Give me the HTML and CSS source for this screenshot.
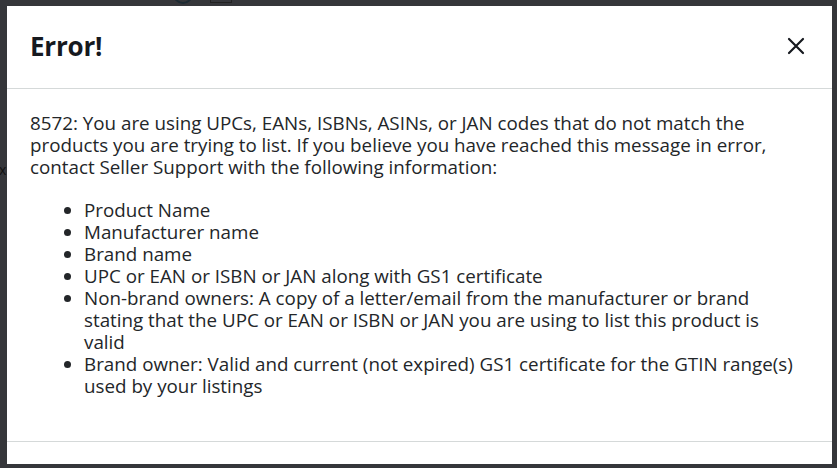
FILE: index.html
```html
<!DOCTYPE html>
<html lang="en">
<head>
    <meta charset="UTF-8">
    <meta name="viewport" content="width=device-width, initial-scale=1.0">
    <title>Error</title>
    <link rel="stylesheet" href="styles.css">
</head>
<body>
    <!-- Page behind the overlay -->
    <div class="backdrop-bits">
        <span class="bit-circle"></span>
        <span class="bit-square"></span>
        <span class="bit-x">x</span>
    </div>

    <!-- Modal -->
    <div class="modal">
        <div class="modal-header">
            <h1 class="modal-title">Error!</h1>
            <button class="close-button" aria-label="Close">
                <svg width="18" height="18" viewBox="0 0 18 18">
                    <path d="M2 2 L16 16 M16 2 L2 16" stroke="#16191f" stroke-width="2.2" stroke-linecap="round" fill="none"/>
                </svg>
            </button>
        </div>

        <div class="modal-body">
            <p>8572: You are using UPCs, EANs, ISBNs, ASINs, or JAN codes that do not match the products you are trying to list. If you believe you have reached this message in error, contact Seller Support with the following information:</p>
            <ul>
                <li>Product Name</li>
                <li>Manufacturer name</li>
                <li>Brand name</li>
                <li>UPC or EAN or ISBN or JAN along with GS1 certificate</li>
                <li>Non-brand owners: A copy of a letter/email from the manufacturer or brand stating that the UPC or EAN or ISBN or JAN you are using to list this product is valid</li>
                <li>Brand owner: Valid and current (not expired) GS1 certificate for the GTIN range(s) used by your listings</li>
            </ul>
        </div>

        <div class="modal-footer"></div>
    </div>
</body>
</html>
```

FILE: styles.css
```css
* {
    box-sizing: border-box;
    margin: 0;
    padding: 0;
}

body {
    background: #35363a;
    font-family: 'Open Sans', 'Noto Sans', sans-serif;
    color: #16191f;
    height: 100vh;
    overflow: hidden;
    padding: 6px 5px 0 7px;
    position: relative;
}

/* Bits of the page under the overlay */
.backdrop-bits .bit-circle {
    position: absolute;
    left: 173px;
    top: -16px;
    width: 20px;
    height: 20px;
    border: 2px solid #1d2b33;
    border-radius: 50%;
}

.backdrop-bits .bit-square {
    position: absolute;
    left: 210px;
    top: -1px;
    width: 22px;
    height: 4px;
    border: 1px solid #222;
}

.backdrop-bits .bit-x {
    position: absolute;
    left: -1px;
    top: 160px;
    font-size: 14px;
    color: #111;
}

/* Modal */
.modal {
    background: #fff;
    width: 825px;
    height: 458px;
    display: flex;
    flex-direction: column;
}

.modal-header {
    height: 83px;
    border-bottom: 1px solid #d5d9d9;
    display: flex;
    align-items: center;
    justify-content: space-between;
    padding: 0 22px 3px 23px;
}

.modal-title {
    font-size: 26px;
    font-weight: 700;
    letter-spacing: -0.2px;
}

.close-button {
    background: none;
    border: none;
    width: 28px;
    height: 28px;
    display: flex;
    align-items: center;
    justify-content: center;
    cursor: pointer;
}

.modal-body {
    flex: 1;
    padding: 23px 30px 0 23px;
    font-size: 18.8px;
    line-height: 22px;
    color: #232629;
}

.modal-body p {
    margin-bottom: 21px;
}

.modal-body ul {
    padding-left: 54px;
}

.modal-footer {
    height: 23px;
    border-top: 1px solid #d5d9d9;
}
```
